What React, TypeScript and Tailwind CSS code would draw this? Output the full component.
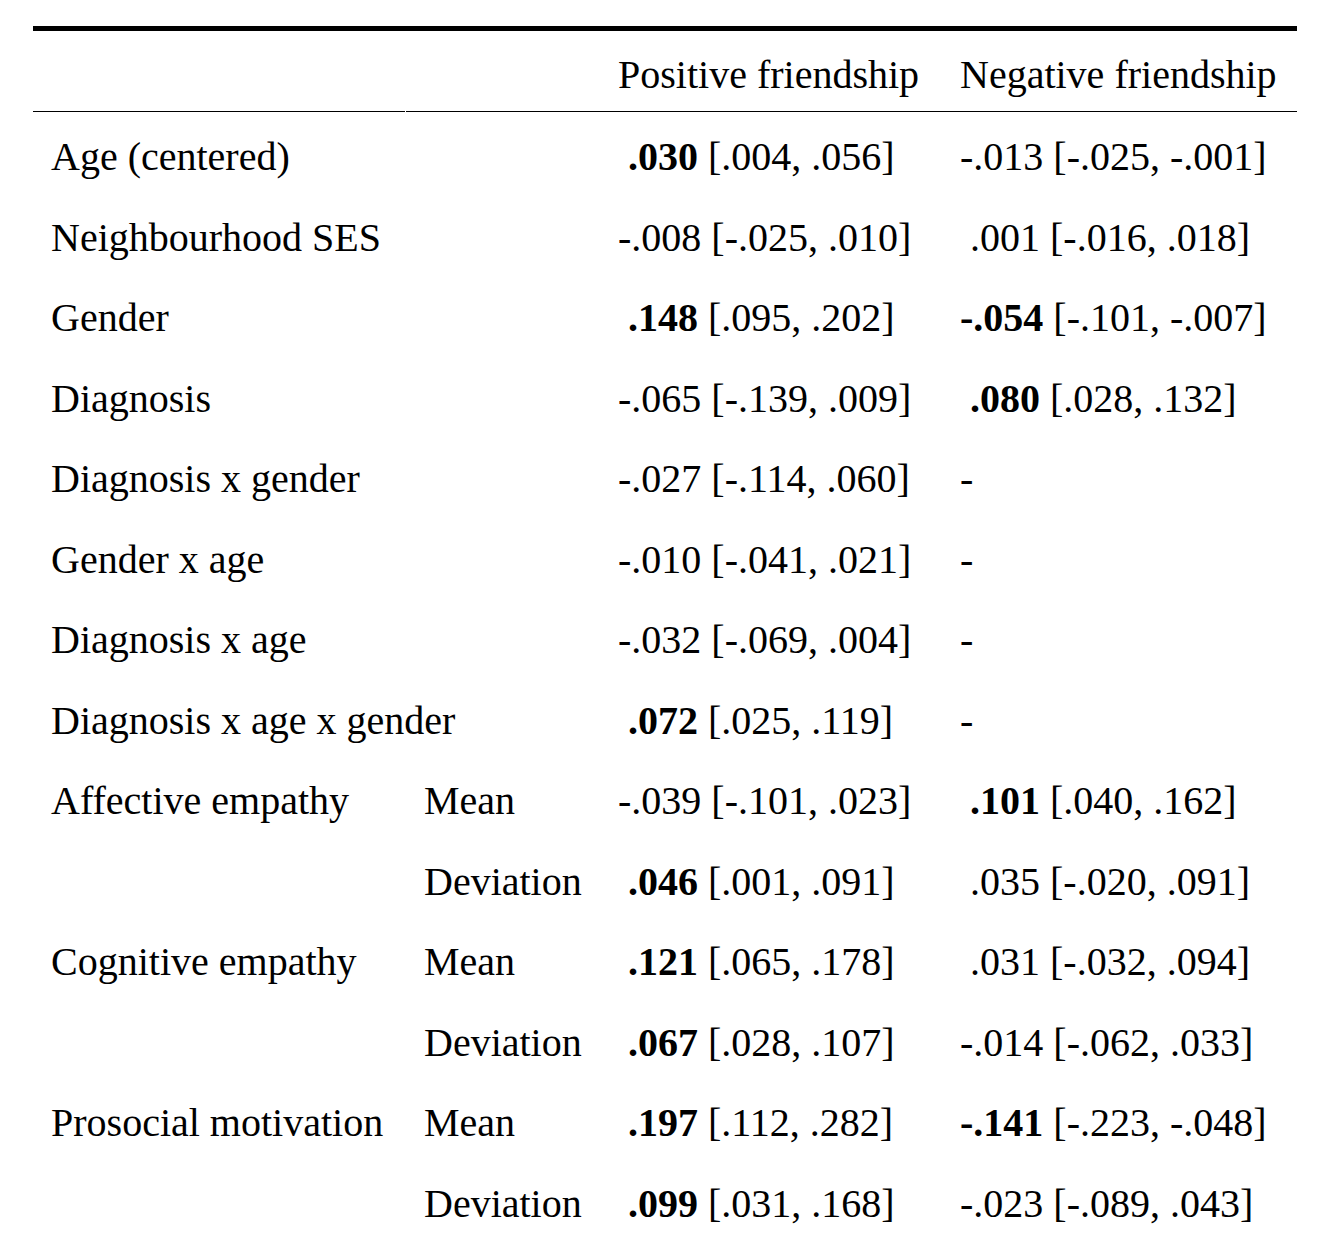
import React from 'react';

type Row = {
  label?: string;
  sub?: string;
  span?: boolean;
  pos: [string, string] | null;
  neg: [string, string] | null;
  posBold?: boolean;
  negBold?: boolean;
};

// rows of the table; first part of each value may be bold
const rows: Row[] = [
  { label: 'Age (centered)', pos: ['.030', ' [.004, .056]'], posBold: true, neg: ['-.013', ' [-.025, -.001]'] },
  { label: 'Neighbourhood SES', pos: ['-.008', ' [-.025, .010]'], neg: ['.001', ' [-.016, .018]'] },
  { label: 'Gender', pos: ['.148', ' [.095, .202]'], posBold: true, neg: ['-.054', ' [-.101, -.007]'], negBold: true },
  { label: 'Diagnosis', pos: ['-.065', ' [-.139, .009]'], neg: ['.080', ' [.028, .132]'], negBold: true },
  { label: 'Diagnosis x gender', pos: ['-.027', ' [-.114, .060]'], neg: null },
  { label: 'Gender x age', pos: ['-.010', ' [-.041, .021]'], neg: null },
  { label: 'Diagnosis x age', pos: ['-.032', ' [-.069, .004]'], neg: null },
  { label: 'Diagnosis x age x gender', span: true, pos: ['.072', ' [.025, .119]'], posBold: true, neg: null },
  { label: 'Affective empathy', sub: 'Mean', pos: ['-.039', ' [-.101, .023]'], neg: ['.101', ' [.040, .162]'], negBold: true },
  { sub: 'Deviation', pos: ['.046', ' [.001, .091]'], posBold: true, neg: ['.035', ' [-.020, .091]'] },
  { label: 'Cognitive empathy', sub: 'Mean', pos: ['.121', ' [.065, .178]'], posBold: true, neg: ['.031', ' [-.032, .094]'] },
  { sub: 'Deviation', pos: ['.067', ' [.028, .107]'], posBold: true, neg: ['-.014', ' [-.062, .033]'] },
  { label: 'Prosocial motivation', sub: 'Mean', pos: ['.197', ' [.112, .282]'], posBold: true, neg: ['-.141', ' [-.223, -.048]'], negBold: true },
  { sub: 'Deviation', pos: ['.099', ' [.031, .168]'], posBold: true, neg: ['-.023', ' [-.089, .043]'] },
];

function Value({ v, bold }: { v: [string, string] | null; bold?: boolean }) {
  if (!v) return <span>-</span>;
  const indent = !v[0].startsWith('-');
  return (
    <span className={indent ? 'pl-[10px]' : ''}>
      <span className={bold ? 'font-bold' : ''}>{v[0]}</span>
      {v[1]}
    </span>
  );
}

export default function App() {
  return (
    <div className="min-h-screen bg-white text-black font-['Liberation_Serif','Times_New_Roman',serif] text-[40px] leading-none">
      <div className="ml-[33px] mt-[26px] w-[1264px] border-t-[5px] border-black">
        {/* header */}
        <div className="grid grid-cols-[373px_194px_342px_355px] h-[81px] items-center">
          <div className="h-full border-b border-black mr-[1px]" />
          <div className="h-full border-b border-black" />
          <div className="h-full border-b border-black pl-[18px] pt-[8px] flex items-center whitespace-nowrap">Positive friendship</div>
          <div className="h-full border-b border-black pl-[18px] pt-[8px] flex items-center whitespace-nowrap">Negative friendship</div>
        </div>
        {/* body */}
        {rows.map((r, i) => (
          <div key={i} className="grid grid-cols-[373px_194px_342px_355px] h-[80.5px] items-center whitespace-nowrap pt-[10px]">
            {r.span ? (
              <div className="col-span-2 pl-[18px]">{r.label}</div>
            ) : (
              <>
                <div className="pl-[18px]">{r.label ?? ''}</div>
                <div className="pl-[18px]">{r.sub ?? ''}</div>
              </>
            )}
            <div className="pl-[18px]"><Value v={r.pos} bold={r.posBold} /></div>
            <div className="pl-[18px]"><Value v={r.neg} bold={r.negBold} /></div>
          </div>
        ))}
      </div>
    </div>
  );
}
